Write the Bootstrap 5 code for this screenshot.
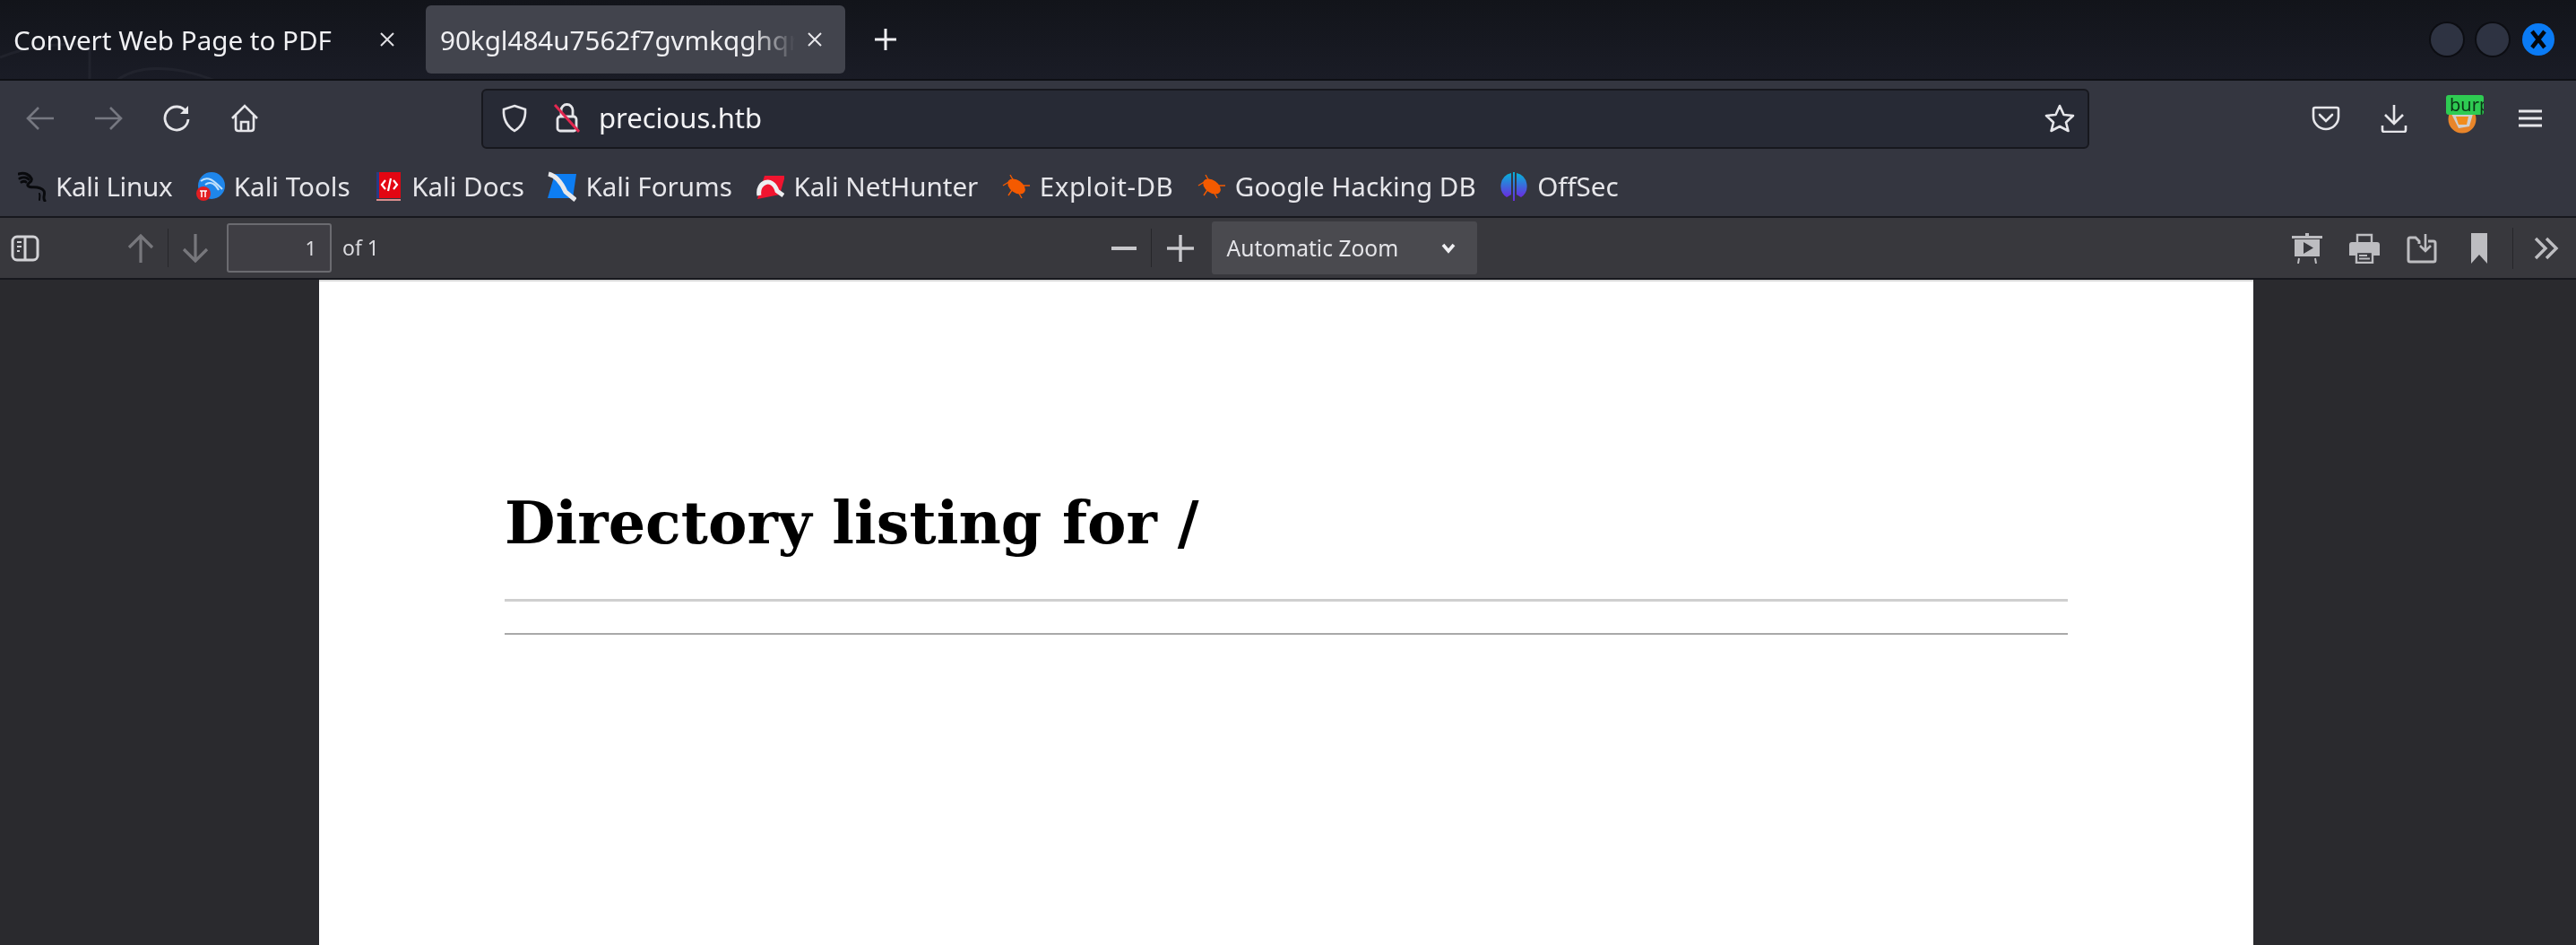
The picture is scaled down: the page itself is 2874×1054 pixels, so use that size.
<!DOCTYPE html>
<html lang="en">
<head>
<meta charset="utf-8">
<title>Directory listing for /</title>
<link href="https://cdn.jsdelivr.net/npm/bootstrap@5.3.0/dist/css/bootstrap.min.css" rel="stylesheet">
<style>
html,body{height:100%;overflow:hidden;background:#2a2a2e}
body{font-family:"Noto Sans",sans-serif;color:#e6e6ea;font-size:29.6px;line-height:1.2;filter:blur(.6px)}
svg{display:block;flex:none}
.tabstrip{height:90px;background:linear-gradient(#12141a,#1a1c26);position:relative;overflow:hidden;border-bottom:2px solid #0f1015}
.wallpaper{position:absolute;left:0;top:44px;opacity:.5}
.tab-one{width:475px;padding-left:15px;position:relative}
.tab-two{width:468px;height:76px;margin-top:6px;margin-bottom:6px;background:#42444d;border-radius:6px;padding-left:16px;position:relative}
.tab-label{white-space:nowrap;overflow:hidden;color:#f0f0f3;padding-top:2px}
.tab-two .tab-label{width:396px;-webkit-mask-image:linear-gradient(90deg,#000 88%,transparent);mask-image:linear-gradient(90deg,#000 88%,transparent)}
.tab-close{position:absolute;top:50%;transform:translateY(-50%)}
.tab-one .tab-close{left:422px}
.tab-two .tab-close{left:424px}
.new-tab{margin-left:32px}
.winctl{margin-left:auto;padding-right:24px;gap:15px}
.winbtn{width:36px;height:36px;border-radius:50%;background:#2e3342;box-shadow:0 0 0 2px #0c0d12}
.winbtn-close{background:#0a7bf5;box-shadow:none}
.navrow{height:84px;background:#343640;padding-left:7px;padding-right:13px}
.tb-btn{width:76px;height:60px}
.urlbar{width:1794px;height:67px;margin-left:226px;background:#272a35;border:2px solid #17181e;border-radius:6px;padding-left:20px;padding-right:14px}
.urlbar-text{margin-left:21px;color:#f3f3f5;font-size:31px}
.lock-gap{margin-left:28px}
.right-tools{margin-left:auto}
.burp-wrap{width:76px;height:60px;position:relative}
.burp-badge{position:absolute;left:20px;top:4px;width:42px;height:22px;background:#2ecb52;border-radius:3px;color:#0b3316;font-size:20px;line-height:21px;overflow:hidden;padding-left:4px;white-space:nowrap}
.burp-icon{margin-top:2px}
.bookrow{height:69px;background:#343640;padding-left:20px;border-bottom:2px solid #17181e;gap:26.5px}
.bookitem{gap:10px;white-space:nowrap}
.tight-label{letter-spacing:-.3px}
.wide-label{letter-spacing:.5px}
.pdfbar{height:69px;background:#38383d;border-bottom:2px solid #17181e}
.pdf-side{flex:1 1 0}
.pdf-center{margin-left:13px}
.pdf-sep{width:1px;height:43px;background:#26262a}
.pagebox{width:117px;height:55px;margin-left:20px;border:2px solid #6b6b70;border-radius:3px;background:#3f3e44;font-size:22px;text-align:right;padding-right:15px;line-height:51px;color:#dcdce0}
.pageof{font-size:23px;margin-left:12px;color:#dcdce0}
.zoomsel{width:296px;height:59px;background:#4a4a4f;border-radius:3px;margin-left:20px;padding-left:17px;padding-right:24px;font-size:24.6px;color:#e4e4e8}
.sidebar-ico{margin-left:12px}
.arrow-up{margin-left:98px}
.gap-15{margin-left:15px}
.gap-16{margin-left:16px}
.gap-17{margin-left:17px}
.gap-30{margin-left:30px}
.gap-38{margin-left:38px}
.gap-28{margin-left:28px}
.sep-tall{height:46px}
.chev-end{margin-left:23px;margin-right:19px}
.pdfview{height:742px;background:#2a2a2e;position:relative}
.pdfpage{width:2158px;height:100%;margin-left:356px;background:#fff;padding:0 207px;color:#000;border-top:2px solid #d8d8d8}
.listing-title{font-family:"DejaVu Serif",serif;font-weight:700;font-size:65.2px;line-height:1;margin:0;padding-top:237px}
.rule-a{height:3px;background:#cfcfcf}
.rule-b{height:2px;background:#a9a9a9;margin-top:35px}
.title-box{height:354px}
</style>
</head>
<body>
<div class="tabstrip d-flex">
  <svg class="wallpaper" width="300" height="46" viewBox="0 0 300 46" fill="none" stroke="#2a2c36" stroke-width="3"><path d="M0 20C30 8 70 2 100 8V46"/><path d="M130 46C150 30 190 26 240 46"/></svg>
  <div class="tab-one d-flex align-items-center">
    <div class="tab-label">Convert Web Page to PDF</div>
    <svg class="tab-close" width="20" height="20" viewBox="0 0 20 20" stroke="#e0e0e4" stroke-width="2"><path d="M3 3L17 17M17 3L3 17"/></svg>
  </div>
  <div class="tab-two d-flex align-items-center">
    <div class="tab-label">90kgl484u7562f7gvmkqghqr</div>
    <svg class="tab-close" width="20" height="20" viewBox="0 0 20 20" stroke="#e8e8ec" stroke-width="2"><path d="M3 3L17 17M17 3L3 17"/></svg>
  </div>
  <div class="new-tab d-flex align-items-center">
    <svg width="26" height="26" viewBox="0 0 26 26" stroke="#f0f0f3" stroke-width="3"><path d="M13 1V25M1 13H25"/></svg>
  </div>
  <div class="winctl d-flex align-items-center">
    <div class="winbtn"></div>
    <div class="winbtn"></div>
    <div class="winbtn winbtn-close d-flex align-items-center justify-content-center">
      <svg width="20" height="22" viewBox="0 0 20 22" stroke="#04070c" stroke-width="4.500"><path d="M3 2L17 20M17 2L3 20"/></svg>
    </div>
  </div>
</div>

<div class="navrow d-flex align-items-center">
  <div class="tb-btn d-flex align-items-center justify-content-center">
    <svg width="32" height="28" viewBox="0 0 32 28" fill="none" stroke="#767881" stroke-width="2.6"><path d="M31 14H2M14 2L2 14L14 26"/></svg>
  </div>
  <div class="tb-btn d-flex align-items-center justify-content-center">
    <svg width="32" height="28" viewBox="0 0 32 28" fill="none" stroke="#767881" stroke-width="2.6"><path d="M1 14H30M18 2L30 14L18 26"/></svg>
  </div>
  <div class="tb-btn d-flex align-items-center justify-content-center">
    <svg width="32" height="32" viewBox="0 0 32 32" fill="none" stroke="#e6e6ea" stroke-width="2.8"><path d="M27 9A13 13 0 1 0 29 17"/><path d="M29 2V11H20Z" fill="#e6e6ea" stroke="none"/></svg>
  </div>
  <div class="tb-btn d-flex align-items-center justify-content-center">
    <svg width="32" height="32" viewBox="0 0 32 32" fill="none" stroke="#e6e6ea" stroke-width="2.6"><path d="M2 16L16 2L30 16"/><path d="M6 13V27Q6 30 9 30H23Q26 30 26 27V13"/><path d="M12 30V20H20V30"/></svg>
  </div>
  <div class="urlbar d-flex align-items-center">
    <svg width="30" height="32" viewBox="0 0 30 32" fill="none" stroke="#e6e6ea" stroke-width="2.6"><path d="M15 2L27 6Q28 22 15 30Q2 22 3 6Z"/></svg>
    <svg class="lock-gap" width="30" height="34" viewBox="0 0 30 34" fill="none"><path d="M9 15V8A6.500 6.500 0 0 1 22 8V15" stroke="#e6e6ea" stroke-width="2.800"/><rect x="5" y="15" width="21" height="16" rx="3" stroke="#e6e6ea" stroke-width="2.800"/><path d="M2 2L29 32" stroke="#e22850" stroke-width="3"/></svg>
    <span class="urlbar-text">precious.htb</span>
    <svg class="ms-auto" width="34" height="32" viewBox="0 0 34 32" fill="none" stroke="#e6e6ea" stroke-width="2.6" stroke-linejoin="round"><path d="M17 2L21.500 12L32 13L24 20.500L26.500 30L17 25L7.500 30L10 20.500L2 13L12.500 12Z"/></svg>
  </div>
  <div class="right-tools d-flex align-items-center">
    <div class="tb-btn d-flex align-items-center justify-content-center">
      <svg width="32" height="28" viewBox="0 0 32 28" fill="none" stroke="#e6e6ea" stroke-width="2.6"><path d="M4 2H28Q30 2 30 4V12A14 14 0 0 1 2 12V4Q2 2 4 2Z"/><path d="M9 10L16 17L23 10" stroke-linecap="round"/></svg>
    </div>
    <div class="tb-btn d-flex align-items-center justify-content-center">
      <svg width="30" height="32" viewBox="0 0 30 32" fill="none" stroke="#e6e6ea" stroke-width="2.6"><path d="M15 1V22M5 12L15 22L25 12"/><path d="M2 24V29Q2 31 4 31H26Q28 31 28 29V24"/></svg>
    </div>
    <div class="burp-wrap d-flex align-items-center justify-content-center">
      <svg class="burp-icon" width="32" height="32" viewBox="0 0 32 32"><circle cx="16" cy="16" r="15.500" fill="#e8852a"/><path d="M4 10L16 4L28 10L24 24L12 26Z" fill="#cfcfcf"/><path d="M9 13H23L21 22H12Z" fill="#f28c1c"/></svg>
      <div class="burp-badge">burp</div>
    </div>
    <div class="tb-btn d-flex align-items-center justify-content-center">
      <svg width="26" height="22" viewBox="0 0 26 22" stroke="#e6e6ea" stroke-width="2.800"><path d="M0 3H26M0 11H26M0 19H26"/></svg>
    </div>
  </div>
</div>

<div class="bookrow d-flex align-items-center">
  <div class="bookitem d-flex align-items-center">
    <svg width="32" height="34" viewBox="0 0 32 34" fill="none" stroke="#090a0d" stroke-width="3" stroke-linecap="round"><path d="M1 3C8 1 13 4 15 8C17 12 10 13 11 16C13 20 24 15 29 22C31 26 27 29 30 33"/><path d="M2 8C6 6 10 7 12 9M4 12C6 11 8 11 9 12"/><path d="M24 25C25 27 24 30 24 32" stroke-width="2"/></svg>
    <span class="tight-label">Kali Linux</span>
  </div>
  <div class="bookitem d-flex align-items-center">
    <svg width="32" height="32" viewBox="0 0 32 32"><circle cx="17" cy="15" r="15" fill="#1f86ea"/><path d="M5 10C13 3 20 10 29 19M10 14C16 9 22 14 25 20" fill="none" stroke="#bfe0fb" stroke-width="2"/><circle cx="8" cy="24" r="8" fill="#e21e22"/><path d="M4 21H12M6 21V28M10 21V28" stroke="#fff" stroke-width="1.500"/></svg>
    <span>Kali Tools</span>
  </div>
  <div class="bookitem d-flex align-items-center">
    <svg width="32" height="34" viewBox="0 0 32 34"><rect x="3" y="1" width="27" height="29" fill="#e30612"/><rect x="3" y="1" width="3" height="29" fill="#283a86"/><rect x="3" y="31" width="27" height="2" fill="#d98c8c"/><path d="M13 10L9 15L13 20M22 10L26 15L22 20M19 8L16 22" fill="none" stroke="#fff" stroke-width="2.200"/></svg>
    <span>Kali Docs</span>
  </div>
  <div class="bookitem d-flex align-items-center">
    <svg width="32" height="34" viewBox="0 0 32 34"><path d="M8 3H32L28 30H0Z" fill="#0d7df2"/><path d="M1 3C10 5 16 14 20 23L31 32" fill="none" stroke="#e8e8ea" stroke-width="5"/></svg>
    <span>Kali Forums</span>
  </div>
  <div class="bookitem d-flex align-items-center">
    <svg width="32" height="30" viewBox="0 0 32 30"><path d="M10 3H33L27 24L2 29Z" fill="#f0142f"/><path d="M4 25C1 10 19 3 24 20L31 25" fill="none" stroke="#eceef0" stroke-width="5"/></svg>
    <span>Kali NetHunter</span>
  </div>
  <div class="bookitem d-flex align-items-center">
    <svg width="32" height="28" viewBox="0 0 32 28"><ellipse cx="16" cy="14" rx="11" ry="7" fill="#f45a00" transform="rotate(35 16 14)"/><path d="M1 13L9 8M9 1L13 8M22 27L18 20M31 13L22 13M7 24L11 18" fill="none" stroke="#f45a00" stroke-width="1.400"/></svg>
    <span class="wide-label">Exploit-DB</span>
  </div>
  <div class="bookitem d-flex align-items-center">
    <svg width="32" height="28" viewBox="0 0 32 28"><ellipse cx="16" cy="14" rx="11" ry="7" fill="#f45a00" transform="rotate(35 16 14)"/><path d="M1 13L9 8M9 1L13 8M22 27L18 20M31 13L22 13M7 24L11 18" fill="none" stroke="#f45a00" stroke-width="1.400"/></svg>
    <span>Google Hacking DB</span>
  </div>
  <div class="bookitem d-flex align-items-center">
    <svg width="32" height="34" viewBox="0 0 32 34"><defs><linearGradient id="offgrad" x1="0" y1="0" x2="0" y2="1"><stop offset="0" stop-color="#06b2d8"/><stop offset="1" stop-color="#6a2be0"/></linearGradient></defs><path d="M13 2A15 15 0 0 0 8 29L13 26ZM19 2A15 15 0 0 1 24 29L19 26Z" fill="url(#offgrad)"/><rect x="15" y="1" width="2" height="32" fill="url(#offgrad)"/></svg>
    <span>OffSec</span>
  </div>
</div>

<div class="pdfbar d-flex align-items-center">
  <div class="pdf-side d-flex align-items-center">
    <svg class="sidebar-ico" width="32" height="30" viewBox="0 0 32 30" fill="none" stroke="#d2d2d6" stroke-width="3"><rect x="2" y="2" width="28" height="26" rx="5"/><path d="M16 2V28"/><path d="M7 8H12M7 13H12M7 18H10" stroke-width="2"/></svg>
    <svg class="arrow-up" width="30" height="34" viewBox="0 0 30 34" fill="none" stroke="#77777c" stroke-width="3.200"><path d="M15 33V3M2 16L15 3L28 16"/></svg>
    <div class="pdf-sep gap-15"></div>
    <svg class="gap-15" width="30" height="34" viewBox="0 0 30 34" fill="none" stroke="#77777c" stroke-width="3.200"><path d="M15 1V31M2 18L15 31L28 18"/></svg>
    <div class="pagebox">1</div>
    <span class="pageof">of 1</span>
  </div>
  <div class="pdf-center d-flex align-items-center">
    <svg width="28" height="4" viewBox="0 0 28 4" fill="#c8c8cc"><rect width="28" height="4"/></svg>
    <div class="pdf-sep gap-16"></div>
    <svg class="gap-17" width="30" height="30" viewBox="0 0 30 30" stroke="#c8c8cc" stroke-width="3.400"><path d="M15 0V30M0 15H30"/></svg>
    <div class="zoomsel d-flex align-items-center justify-content-between">
      <span>Automatic Zoom</span>
      <svg width="16" height="12" viewBox="0 0 16 12" fill="none" stroke="#f0f0f3" stroke-width="3.600"><path d="M2 2L8 9L14 2"/></svg>
    </div>
  </div>
  <div class="pdf-side d-flex align-items-center justify-content-end">
    <svg width="34" height="34" viewBox="0 0 34 34" fill="#bdbdc1"><rect x="0" y="3" width="34" height="3"/><rect x="15" y="0" width="4" height="3"/><path d="M3 7H31V26H3ZM13 10V23L24 16.500Z" fill-rule="evenodd"/><path d="M8 28L7 34M26 28L27 34" stroke="#bdbdc1" stroke-width="2"/></svg>
    <svg class="gap-30" width="34" height="34" viewBox="0 0 34 34"><path d="M9 10V2H25V10" fill="none" stroke="#bdbdc1" stroke-width="2.400"/><path d="M3 10H31Q34 10 34 13V25H27V20H7V25H0V13Q0 10 3 10Z" fill="#bdbdc1"/><rect x="8" y="21" width="18" height="12" fill="none" stroke="#bdbdc1" stroke-width="2.400"/><path d="M11 25H20M11 28.500H23" stroke="#bdbdc1" stroke-width="1.800"/></svg>
    <svg class="gap-30" width="34" height="34" viewBox="0 0 34 34" fill="none" stroke="#bdbdc1" stroke-width="3"><path d="M2 9V30Q2 32 4 32H30Q32 32 32 30V11Q32 9 30 9H24"/><path d="M2 9V7Q2 5 4 5H10L14 9V12"/><path d="M21 1V20M15 14L21 20L27 14" stroke-width="2.600"/></svg>
    <svg class="gap-38" width="18" height="34" viewBox="0 0 18 34" fill="#bdbdc1"><path d="M0 0H18V34L9 24L0 34Z"/></svg>
    <div class="pdf-sep sep-tall gap-28"></div>
    <svg class="chev-end" width="28" height="26" viewBox="0 0 28 26" fill="none" stroke="#bdbdc1" stroke-width="3.400"><path d="M2 2L13 13L2 24M14 2L25 13L14 24"/></svg>
  </div>
</div>

<div class="pdfview">
  <div class="pdfpage">
    <div class="title-box">
      <h1 class="listing-title">Directory listing for /</h1>
    </div>
    <div class="rule-a"></div>
    <div class="rule-b"></div>
  </div>
</div>
<script src="https://cdn.jsdelivr.net/npm/bootstrap@5.3.0/dist/js/bootstrap.bundle.min.js"></script>
</body>
</html>
